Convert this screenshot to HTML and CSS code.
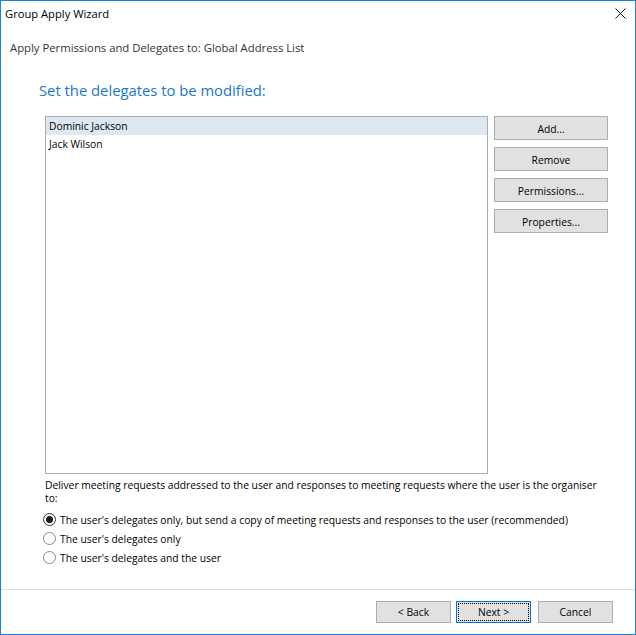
FILE: index.html
```html
<!DOCTYPE html>
<html>
<head>
<meta charset="utf-8">
<title>Group Apply Wizard</title>
<link rel="stylesheet" href="styles.css">
</head>
<body>
<div class="window">
  <div class="titlebar">
    <span class="title">Group Apply Wizard</span>
    <svg class="close" width="11" height="11" viewBox="0 0 11 11"><path d="M0.5 0.5 L10.5 10.5 M10.5 0.5 L0.5 10.5" stroke="#111" stroke-width="1"/></svg>
  </div>
  <div class="subtitle">Apply Permissions and Delegates to: Global Address List</div>
  <div class="heading">Set the delegates to be modified:</div>
  <div class="main">
    <div class="listbox">
      <div class="item selected">Dominic Jackson</div>
      <div class="item">Jack Wilson</div>
    </div>
    <div class="side-buttons">
      <div class="btn side">Add...</div>
      <div class="btn side">Remove</div>
      <div class="btn side">Permissions...</div>
      <div class="btn side">Properties...</div>
    </div>
  </div>
  <div class="deliver">Deliver meeting requests addressed to the user and responses to meeting requests where the user is the organiser to:</div>
  <div class="radios">
    <div class="radio-row"><span class="radio checked"></span><span>The user's delegates only, but send a copy of meeting requests and responses to the user (recommended)</span></div>
    <div class="radio-row"><span class="radio"></span><span>The user's delegates only</span></div>
    <div class="radio-row"><span class="radio"></span><span>The user's delegates and the user</span></div>
  </div>
  <div class="spacer"></div>
  <div class="footer">
    <div class="btn foot">&lt; Back</div>
    <div class="btn foot default"><span class="focus">Next &gt;</span></div>
    <div class="btn foot cancel">Cancel</div>
  </div>
</div>
</body>
</html>
```
FILE: styles.css
```css
html, body {
  margin: 0;
  padding: 0;
  background: #ffffff;
}
body {
  font-family: "Open Sans", "Noto Sans", sans-serif;
  font-size: 10.3px;
  color: #000;
}
.window {
  width: 636px;
  height: 635px;
  box-sizing: border-box;
  border: 1px solid #1883d7;
  display: flex;
  flex-direction: column;
  background: #fff;
}
.titlebar {
  height: 25px;
  display: flex;
  align-items: center;
  justify-content: space-between;
  padding: 0 9px 0 4px;
}
.title {
  font-size: 11.2px;
  color: #000;
}
.close {
  display: block;
}
.subtitle {
  margin-top: 14px;
  padding-left: 9px;
  height: 16px;
  line-height: 16px;
  font-size: 11.3px;
  color: #333;
}
.heading {
  margin-top: 24px;
  padding-left: 38px;
  font-size: 14.8px;
  line-height: 20px;
  height: 20px;
  color: #1a77c9;
}
.main {
  margin-top: 16px;
  display: flex;
  padding-left: 44px;
  gap: 6px;
}
.listbox {
  width: 443px;
  height: 358px;
  box-sizing: border-box;
  border: 1px solid #acacac;
}
.item {
  height: 18px;
  line-height: 18px;
  padding-left: 3px;
  color: #000;
}
.item.selected {
  background: #dde8f3;
}
.side-buttons {
  display: flex;
  flex-direction: column;
  gap: 7px;
}
.btn {
  box-sizing: border-box;
  background: #e1e1e1;
  border: 1px solid #adadad;
  display: flex;
  align-items: center;
  justify-content: center;
  color: #000;
}
.btn.side {
  width: 114px;
  height: 24px;
  padding-top: 1px;
}
.deliver {
  margin-top: 5px;
  padding-left: 44px;
  padding-right: 30px;
  line-height: 13px;
}
.radios {
  margin-top: 5px;
  padding-left: 42px;
  display: flex;
  flex-direction: column;
}
.radio-row {
  height: 19px;
  display: flex;
  align-items: center;
  gap: 4px;
  white-space: nowrap;
}
.radio {
  width: 13px;
  height: 13px;
  box-sizing: border-box;
  border: 1px solid #8a8a8a;
  border-radius: 50%;
  background: #fff;
  display: flex;
  align-items: center;
  justify-content: center;
  flex: none;
}
.radio.checked {
  border-color: #333;
}
.radio.checked::after {
  content: "";
  width: 7px;
  height: 7px;
  border-radius: 50%;
  background: #1a1a1a;
}
.spacer {
  flex: 1;
}
.footer {
  border-top: 1px solid #dfdfdf;
  height: 45px;
  box-sizing: border-box;
  display: flex;
  align-items: center;
  justify-content: flex-end;
  padding-right: 22px;
  gap: 5px;
}
.btn.foot {
  width: 75px;
  height: 22px;
}
.btn.cancel {
  margin-left: 2px;
}
.btn.default {
  border-color: #0078d7;
  padding: 1px;
}
.focus {
  flex: 1;
  align-self: stretch;
  display: flex;
  align-items: center;
  justify-content: center;
  outline: 1px dotted #000;
  outline-offset: -1px;
}
```
